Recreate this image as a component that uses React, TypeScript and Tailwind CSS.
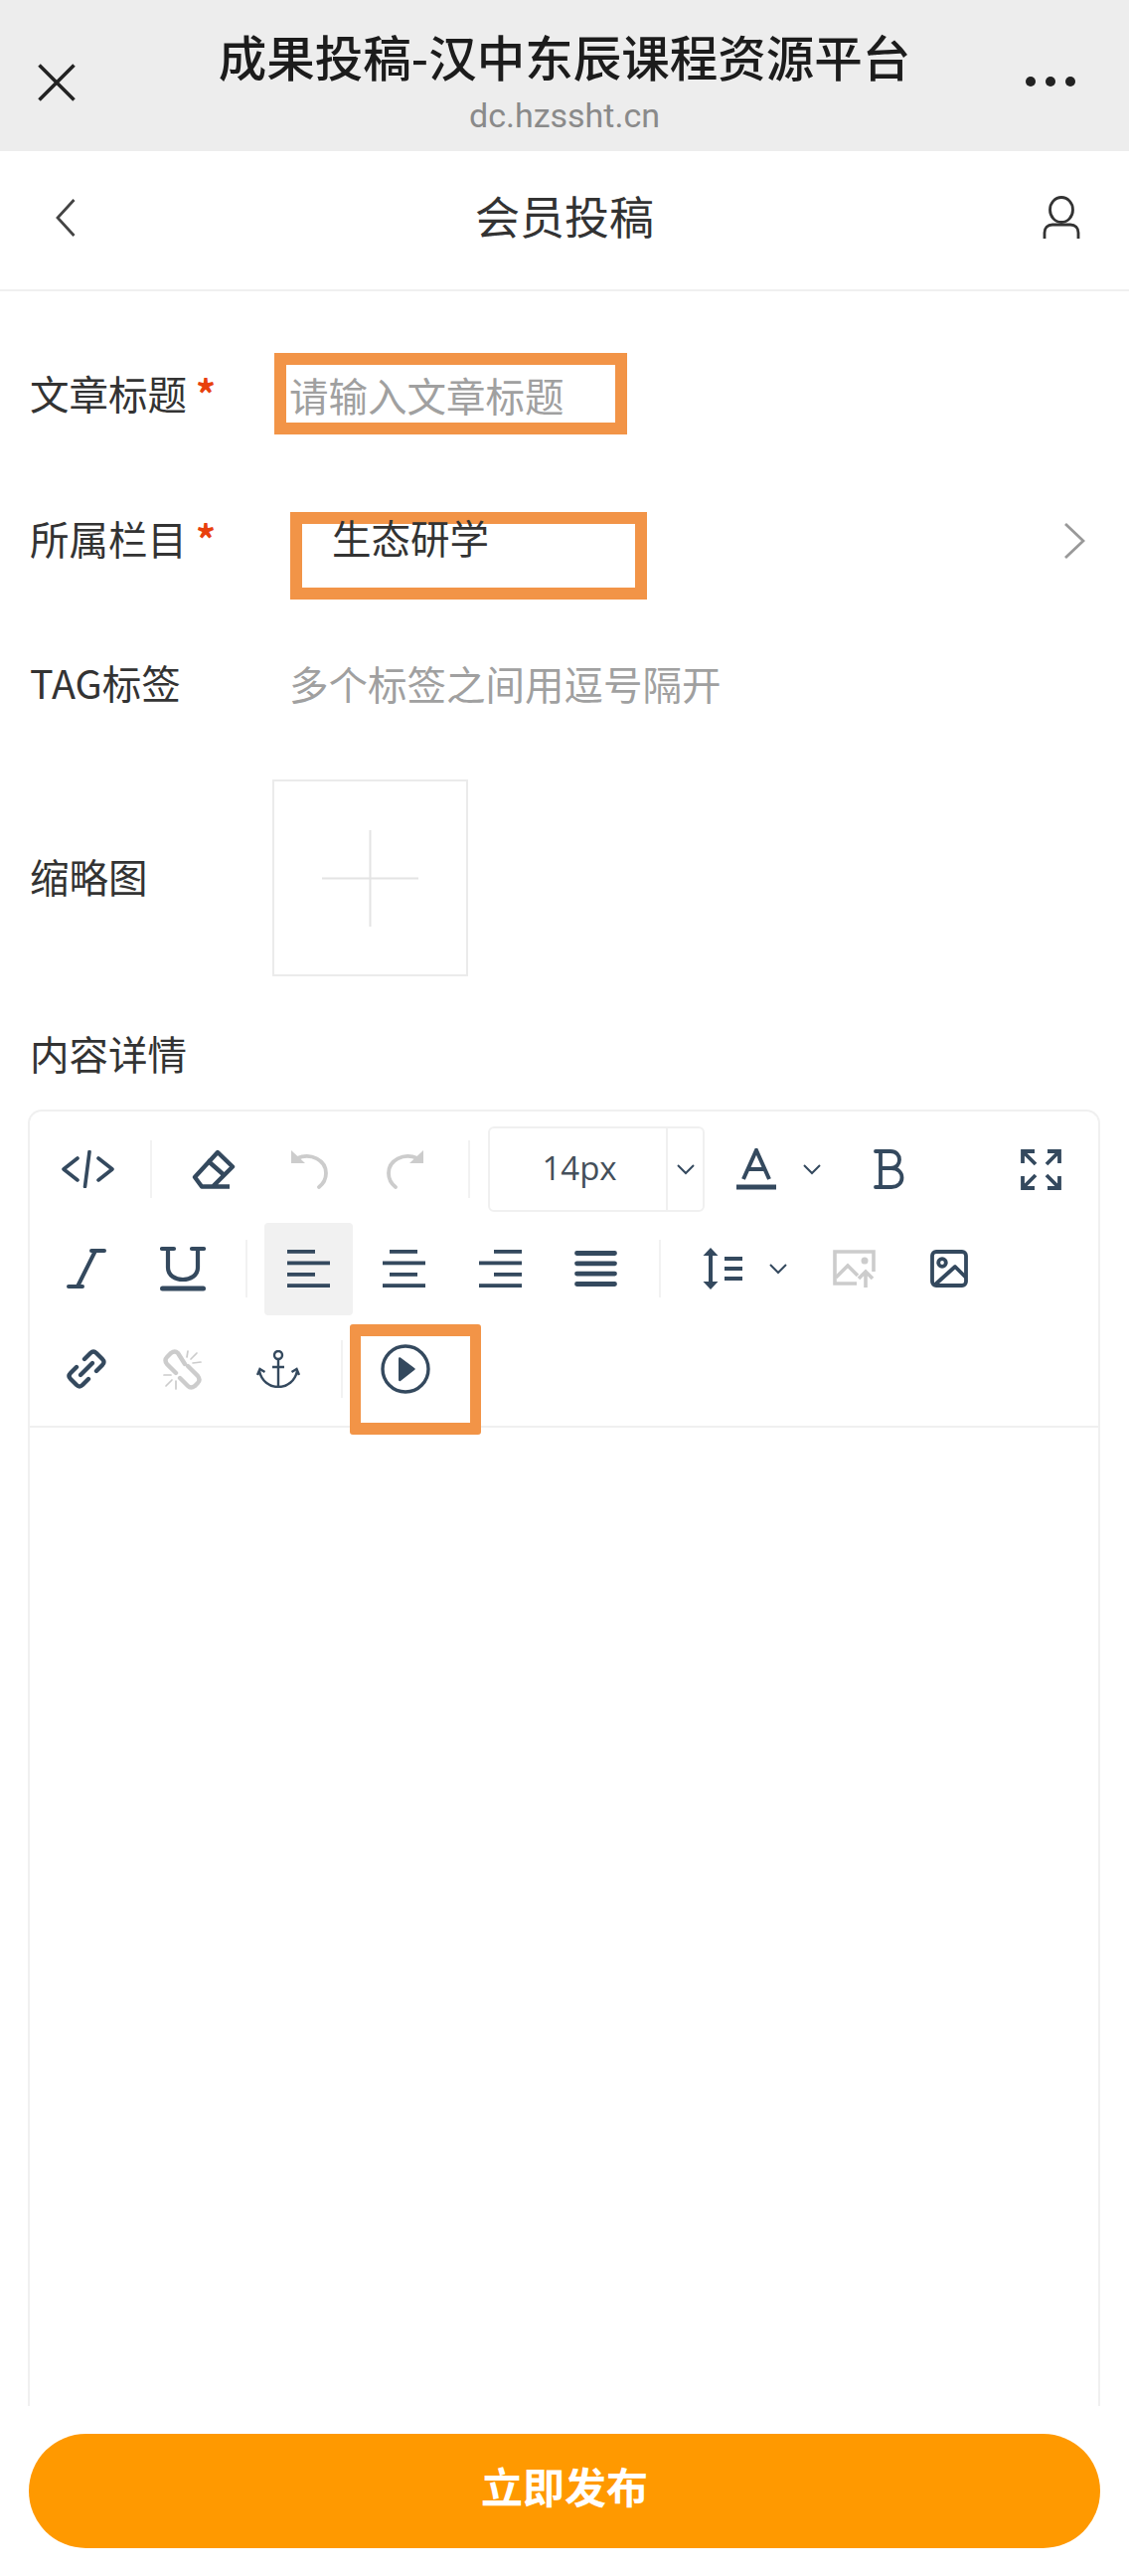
import React from "react";

const DARK = "#34495e";
const GREY = "#cccccc";

function Cell({ className, children }: { className: string; children?: React.ReactNode }) {
  return <div className={`flex shrink-0 items-center justify-center ${className}`}>{children}</div>;
}

function Sep({ className }: { className: string }) {
  return <div className={`h-[58px] w-[2px] shrink-0 bg-[#f2f2f2] ${className}`} />;
}

function Chevron() {
  return (
    <svg width="18" height="11" viewBox="0 0 18 11" fill="none" stroke={DARK} strokeWidth="2">
      <path d="M1 1l8 8 8-8" />
    </svg>
  );
}

function AlignIcon({ kind }: { kind: "left" | "center" | "right" }) {
  const xs = kind === "left" ? 0 : kind === "center" ? 7 : 15;
  return (
    <svg width="43" height="38" viewBox="0 0 43 38" fill={DARK}>
      <rect x={xs} y="0" width="28" height="3.8" />
      <rect x="0" y="11.500" width="43" height="3.8" />
      <rect x={xs} y="23" width="28" height="3.8" />
      <rect x="0" y="34.200" width="43" height="3.8" />
    </svg>
  );
}

export default function App() {
  return (
    <div className="h-[2591px] w-[1136px] overflow-hidden bg-white font-['Noto_Sans_CJK_SC','Liberation_Sans',sans-serif] text-[39.5px] leading-[56px] text-[#333333]">
      {/* browser bar */}
      <header className="flex h-[152px] items-center bg-[#ededed]">
        <Cell className="w-[114px] pt-[14px]">
          <svg width="38" height="38" viewBox="0 0 38 38" fill="none" stroke="#222222" strokeWidth="3.600">
            <path d="M1.500 1.500l35 35M36.500 1.500l-35 35" />
          </svg>
        </Cell>
        <div className="flex-1 text-center">
          <div className="mt-[7px] text-[48.5px] leading-[64px] font-medium whitespace-nowrap text-[#1c1c1c]">成果投稿-汉中东辰课程资源平台</div>
          <div className="mt-[9px] font-['Roboto',sans-serif] text-[34px] leading-[38px] text-[#8a8a8a]">dc.hzssht.cn</div>
        </div>
        <Cell className="w-[114px] pt-[12px] pr-[44px]">
          <svg width="50" height="12" viewBox="0 0 50 12" fill="#222222">
            <circle cx="5" cy="6" r="5" />
            <circle cx="25" cy="6" r="5" />
            <circle cx="45" cy="6" r="5" />
          </svg>
        </Cell>
      </header>

      {/* page nav */}
      <nav className="flex h-[141px] items-center border-b-2 border-[#f0f0f0] pb-[6px]">
        <Cell className="w-[132px]">
          <svg width="20" height="38" viewBox="0 0 20 38" fill="none" stroke="#444444" strokeWidth="2.800">
            <path d="M18.500 1L2 19l16.500 18" />
          </svg>
        </Cell>
        <div className="mt-[-4px] flex-1 text-center text-[45px] leading-[60px] text-[#333333]">会员投稿</div>
        <Cell className="w-[132px] pr-[4px]">
          <svg width="38" height="44" viewBox="0 0 38 44" fill="none" stroke="#333333" strokeWidth="2.800">
            <ellipse cx="19" cy="14" rx="11.500" ry="12.500" />
            <path d="M2 43v-6c0-5 3-8 8-8h18c5 0 8 3 8 8v6" />
          </svg>
        </Cell>
      </nav>

      {/* form */}
      <div className="mt-[62px] flex h-[82px] items-center pl-[30px]">
        <div className="mt-[-2px] w-[246px] shrink-0">
          文章标题<span className="ml-[9px] font-bold text-[#e8400c]">*</span>
        </div>
        <div className="h-[82px] w-[355px] border-[12px] border-[#f29447] pl-[3px]">
          <input
            className="h-full w-full bg-transparent leading-[56px] outline-none placeholder:text-[#a0a0a0]"
            placeholder="请输入文章标题"
            readOnly
          />
        </div>
      </div>

      <div className="mt-[78px] flex h-[88px] items-start pl-[30px]">
        <div className="mt-[-2px] w-[262px] shrink-0">
          所属栏目<span className="ml-[9px] font-bold text-[#e8400c]">*</span>
        </div>
        <div className="h-[88px] w-[359px] border-[12px] border-[#f29447] pl-[30px]">
          <div className="relative mt-[-15px]">生态研学</div>
        </div>
        <div className="mt-[11px] ml-auto pr-[44px]">
          <svg width="22" height="36" viewBox="0 0 22 36" fill="none" stroke="#999999" strokeWidth="2.800">
            <path d="M2 1l18 17L2 35" />
          </svg>
        </div>
      </div>

      <div className="mt-[57px] flex h-[56px] items-center pl-[30px]">
        <div className="mt-[-5px] w-[261px] shrink-0">TAG标签</div>
        <div className="mt-[-3px] text-[#a0a0a0]">多个标签之间用逗号隔开</div>
      </div>

      <div className="mt-[68px] flex items-center pl-[30px]">
        <div className="mt-[-5px] w-[244px] shrink-0">缩略图</div>
        <div className="flex h-[198px] w-[197px] items-center justify-center border-2 border-[#ebebeb]">
          <svg width="97" height="97" viewBox="0 0 97 97" fill="#e4e4e4">
            <rect x="0" y="47.500" width="97" height="2" />
            <rect x="47.500" y="0" width="2" height="97" />
          </svg>
        </div>
      </div>

      <div className="mt-[49px] mb-[29px] pl-[30px]">内容详情</div>

      {/* editor */}
      <section className="ml-[28px] h-[1304px] w-[1079px] rounded-t-[14px] border-2 border-b-0 border-[#f0f0f0]">
        <div className="flex h-[318px] flex-col border-b-2 border-[#f0f0f0] pt-[8px]">
          {/* row 1 */}
          <div className="flex h-[100px] items-center">
            <Cell className="w-[116px]">
              <svg width="53" height="38" viewBox="0 0 53 38" fill="none" stroke={DARK} strokeWidth="3.600" strokeLinecap="round" strokeLinejoin="round">
                <path d="M16 8L2 19l14 11M37 8l14 11-14 11M23.500 36.500L28 1.500" />
              </svg>
            </Cell>
            <Sep className="ml-[5px]" />
            <Cell className="w-[124px]">
              <svg width="44" height="40" viewBox="0 0 44 40" fill="none" stroke={DARK} strokeWidth="4.400" strokeLinejoin="round">
                <path d="M26 3l15 14.500L21 37.500H10L3 28zM15.500 11l17 15M20 37.500h18" />
              </svg>
            </Cell>
            <Cell className="w-[68px]">
              <svg width="38" height="40" viewBox="0 0 38 40" fill="none" stroke={GREY} strokeWidth="3.800" strokeLinecap="round">
                <path d="M7 9c14-6 29 2 29 15 0 6-2 10-7 14" />
                <path d="M1 1v13h14z" fill={GREY} stroke="none" />
              </svg>
            </Cell>
            <Cell className="w-[126px]">
              <svg width="38" height="40" viewBox="0 0 38 40" fill="none" stroke={GREY} strokeWidth="3.800" strokeLinecap="round">
                <path d="M31 9C17 3 2 11 2 24c0 6 2 10 7 14" />
                <path d="M37 1v13H23z" fill={GREY} stroke="none" />
              </svg>
            </Cell>
            <Sep className="" />
            <div className="ml-[18px] flex h-[86px] w-[218px] shrink-0 rounded-[6px] border-2 border-[#f0f0f0]">
              <div className="flex-1 pl-[3px] text-center font-['Open_Sans',sans-serif] text-[33px] leading-[80px] text-[#444f5a]">14px</div>
              <Cell className="w-[37px] border-l-2 border-[#f0f0f0]">
                <Chevron />
              </Cell>
            </div>
            <Cell className="ml-[18px] w-[68px]">
              <svg width="40" height="42" viewBox="0 0 40 42" fill="none" stroke={DARK} strokeWidth="4">
                <path d="M7 31L20 2l13 29M12 21h16" />
                <rect x="0" y="36.500" width="40" height="5" fill={DARK} stroke="none" />
              </svg>
            </Cell>
            <Cell className="w-[44px]">
              <Chevron />
            </Cell>
            <Cell className="w-[112px]">
              <svg width="32" height="40" viewBox="0 0 32 40" fill="none" stroke={DARK} strokeWidth="3.800" strokeLinecap="round">
                <path d="M2 2h15c12 0 12 17 0 17H7m0 0h11c14 0 14 19 0 19H2M7 2v36" />
              </svg>
            </Cell>
            <Cell className="mr-[23px] ml-auto w-[70px]">
              <svg width="41" height="41" viewBox="0 0 41 41" fill="none" stroke={DARK} strokeWidth="3.800">
                <path d="M2 14V2h12M2 2l13 13M27 2h12v12M39 2L26 15M2 27v12h12M2 39l13-13M27 39h12V27M39 39L26 26" />
              </svg>
            </Cell>
          </div>

          {/* row 2 */}
          <div className="flex h-[100px] items-center">
            <Cell className="w-[114px]">
              <svg width="40" height="40" viewBox="0 0 40 40" fill="none" stroke={DARK} strokeWidth="4" strokeLinecap="round">
                <path d="M25 2h13M29 2L11 38M2 38h14" />
              </svg>
            </Cell>
            <Cell className="w-[80px]">
              <svg width="46" height="46" viewBox="0 0 46 46" fill="none" stroke={DARK} strokeWidth="4.200" strokeLinecap="round">
                <path d="M2 3h12M32 3h12M8 3v19c0 16 30 16 30 0V3" />
                <path d="M2.500 43h41" strokeWidth="5" />
              </svg>
            </Cell>
            <Sep className="ml-[23px]" />
            <Cell className="ml-[17px] h-[93px] w-[89px] rounded-[4px] bg-[#f1f1f1]">
              <AlignIcon kind="left" />
            </Cell>
            <Cell className="w-[102px]">
              <AlignIcon kind="center" />
            </Cell>
            <Cell className="w-[92px]">
              <AlignIcon kind="right" />
            </Cell>
            <Cell className="w-[100px]">
              <svg width="43" height="36" viewBox="0 0 43 36" fill="none" stroke={DARK} strokeWidth="4.800" strokeLinecap="round">
                <path d="M2.500 2.500h38M2.500 12.800h38M2.500 23.100h38M2.500 33.500h38" />
              </svg>
            </Cell>
            <Sep className="ml-[14px]" />
            <Cell className="ml-[30px] w-[64px]">
              <svg width="40" height="42" viewBox="0 0 40 42" fill={DARK}>
                <path d="M8 0l7.500 8H10v26h5.500L8 42 .5 34H6V8H.5z" />
                <rect x="22" y="9" width="18" height="4" />
                <rect x="22" y="19" width="18" height="4" />
                <rect x="22" y="29" width="18" height="4" />
              </svg>
            </Cell>
            <Cell className="w-[48px]">
              <Chevron />
            </Cell>
            <Cell className="w-[104px]">
              <svg width="43" height="38" viewBox="0 0 43 38" fill="none" stroke={GREY} strokeWidth="3.600">
                <path d="M24 34H2V2h39v20" />
                <path d="M3 28l12-12 10 10" />
                <circle cx="32" cy="11" r="3.500" fill={GREY} stroke="none" />
                <path d="M33 38V22M26 29l7-7 7 7" />
              </svg>
            </Cell>
            <Cell className="w-[88px]">
              <svg width="38" height="38" viewBox="0 0 38 38" fill="none" stroke={DARK} strokeWidth="3.800" strokeLinejoin="round">
                <rect x="2" y="2" width="34" height="34" rx="4" />
                <circle cx="12" cy="13" r="3.800" />
                <path d="M5 35l20-18 11 11" />
              </svg>
            </Cell>
          </div>

          {/* row 3 */}
          <div className="mt-[1px] flex h-[100px] items-center">
            <Cell className="w-[114px]">
              <svg width="42" height="42" viewBox="0 0 42 42" fill="none" stroke={DARK} strokeWidth="4.400" strokeLinecap="round">
                <path d="M19 11l6-6q3-3 6 0l6 6q3 3 0 6l-6 6" />
                <path d="M23 31l-6 6q-3 3-6 0l-6-6q-3-3 0-6l6-6" />
                <path d="M15 27l12-12" />
              </svg>
            </Cell>
            <Cell className="w-[80px]">
              <svg width="40" height="41" viewBox="0 0 40 41" fill="none" stroke={GREY} strokeLinecap="round">
                <path d="M13 24L4 15q-3-4 0-7l4-4q4-3 7 0l7 11" strokeWidth="4.400" />
                <path d="M25 17l10 10q3 4 0 7l-3 3q-4 3-7 0l-8-8" strokeWidth="4.400" />
                <path d="M25 2l-1 6M34 4l-6 6M38 13l-8 1M1 26h7M3 37l6-6M13 40v-8" strokeWidth="1.700" />
              </svg>
            </Cell>
            <Cell className="w-[112px]">
              <svg width="44" height="38" viewBox="0 0 44 38" fill="none" stroke={DARK} strokeWidth="2.400">
                <circle cx="22" cy="5" r="4" />
                <path d="M22 9v28M16 17h12M3 21c2 10 10 16 19 16s17-6 19-16M1 25l2.500-6 5 3M43 25l-2.500-6-5 3" />
              </svg>
            </Cell>
            <Sep className="ml-[7px]" />
            <div className="relative ml-[7px] flex h-full w-[112px] shrink-0 items-center justify-center">
              <svg width="50" height="50" viewBox="0 0 50 50" fill={DARK}>
                <circle cx="25" cy="25" r="23" fill="none" stroke={DARK} strokeWidth="3.400" />
                <path d="M18 14.500c0-1 1-1.500 2-1l14 10.500c1 .6 1 1.400 0 2L20 37c-1 .5-2 0-2-1z" />
              </svg>
              <div className="absolute top-[5px] left-0 h-[111px] w-[132px] rounded-[3px] border-x-[11px] border-y-[12px] border-[#f29447]" />
            </div>
          </div>
        </div>
      </section>

      <button className="mt-[28px] ml-[29px] flex h-[115px] w-[1078px] items-center justify-center rounded-full bg-[#ff9900] pb-[12px] text-[42px] font-bold text-white">
        立即发布
      </button>
    </div>
  );
}
